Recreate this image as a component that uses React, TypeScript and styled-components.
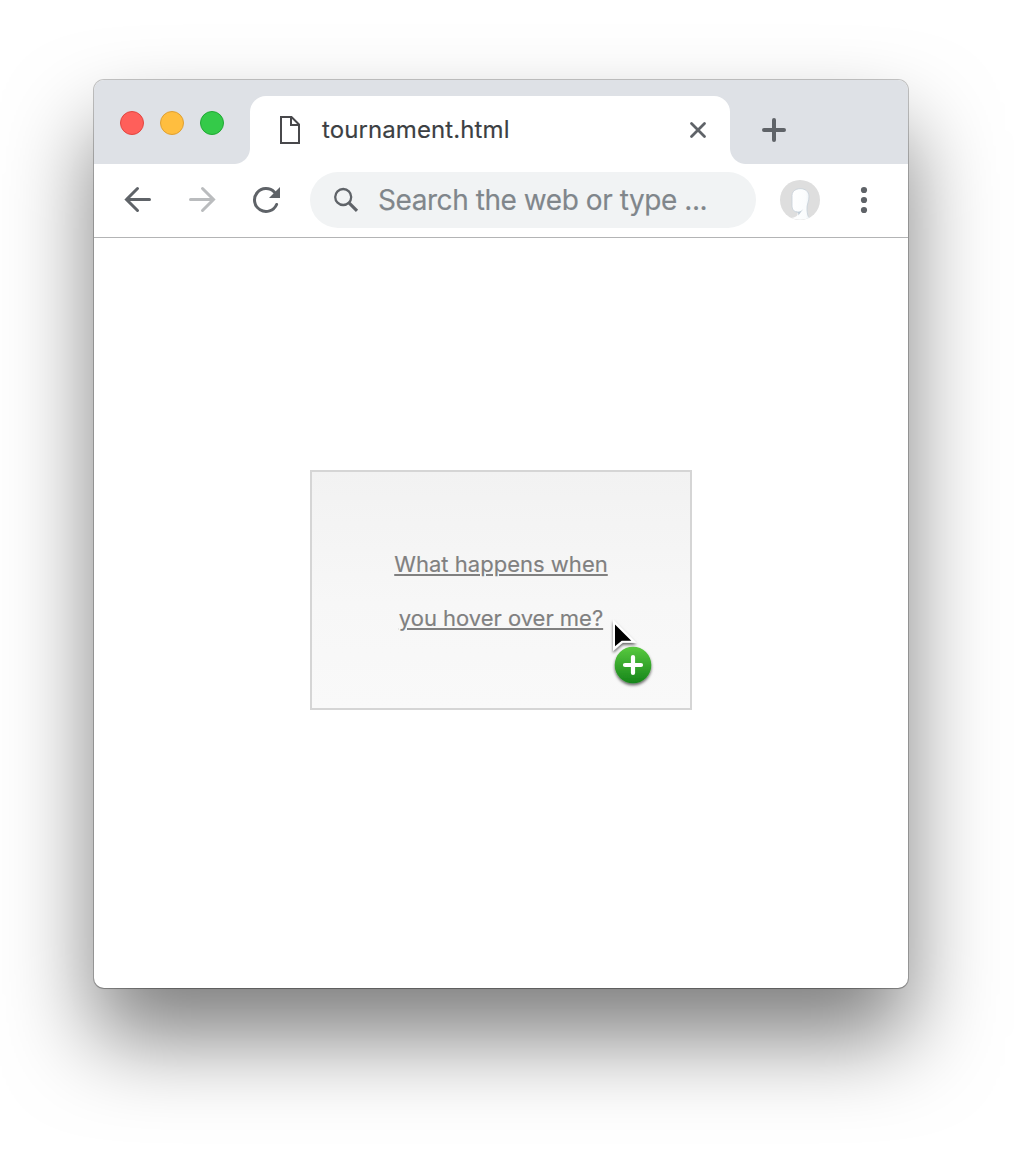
import React from 'react';
import styled, { createGlobalStyle } from 'styled-components';

const Global = createGlobalStyle`
  * { box-sizing: border-box; }
  html, body { margin: 0; background: #fff; overflow: hidden; }
  svg { display: block; flex: none; }
`;

const Page = styled.main`
  height: 1164px;
  padding: 80px 128px 176px 94px;
  font-family: Inter, 'Noto Sans', sans-serif;
  -webkit-text-stroke: 0.15px currentColor;
`;

const BrowserWindow = styled.div`
  height: 908px;
  display: flex;
  flex-direction: column;
  background: #fff;
  border-radius: 10px;
  overflow: hidden;
  box-shadow: 0 0 0 1px rgba(0, 0, 0, 0.22), 0 1px 1px rgba(0, 0, 0, 0.15),
    0 50px 88px rgba(0, 0, 0, 0.51);
`;

const TabStrip = styled.div`
  height: 84px;
  flex: none;
  display: flex;
  align-items: flex-end;
  background: #dee1e6;
`;

const WindowControls = styled.div`
  width: 156px;
  height: 84px;
  padding: 31px 0 0 26px;
  display: flex;
  gap: 16px;
`;

const ControlDot = styled.span<{ $fill: string; $edge: string }>`
  width: 24px;
  height: 24px;
  border-radius: 50%;
  background: ${(p) => p.$fill};
  border: 1px solid ${(p) => p.$edge};
`;

const Tab = styled.div`
  position: relative;
  width: 480px;
  height: 68px;
  padding: 0 22px 0 28px;
  display: flex;
  align-items: center;
  border-radius: 16px 16px 0 0;
  background: #fff;

  &::before,
  &::after {
    content: '';
    position: absolute;
    bottom: 0;
    width: 16px;
    height: 16px;
  }
  &::before {
    left: -16px;
    background: radial-gradient(circle at 0 0, transparent 15.5px, #fff 16.5px);
  }
  &::after {
    right: -16px;
    background: radial-gradient(circle at 100% 0, transparent 15.5px, #fff 16.5px);
  }
`;

const TabTitle = styled.span`
  flex: 1;
  margin-left: 20px;
  font-size: 24px;
  line-height: 32px;
  letter-spacing: 0.1px;
  color: #3c4043;
`;

const NewTab = styled.div`
  height: 68px;
  margin-left: 30px;
  display: flex;
  align-items: center;
`;

const Toolbar = styled.div`
  height: 74px;
  flex: none;
  padding: 8px 30px 9px 28px;
  display: flex;
  align-items: center;
  border-bottom: 1px solid #b3b4b5;
`;

const NavButtons = styled.div`
  width: 188px;
  display: flex;
  gap: 32px;
`;

const AddressBar = styled.div`
  width: 446px;
  height: 56px;
  padding: 0 20px;
  display: flex;
  align-items: center;
  border-radius: 28px;
  background: #f1f3f4;
`;

const Placeholder = styled.span`
  margin-left: 16px;
  font-size: 28px;
  line-height: 40px;
  letter-spacing: -0.44px;
  white-space: nowrap;
  color: #80868b;
`;

const ToolbarEnd = styled.div`
  flex: 1;
  margin-left: 24px;
  display: flex;
  align-items: center;
  justify-content: space-between;
`;

const Content = styled.section`
  flex: 1;
  padding-top: 232px;
  display: flex;
  justify-content: center;
  align-items: flex-start;
`;

const Card = styled.div`
  position: relative;
  width: 382px;
  height: 240px;
  display: flex;
  align-items: center;
  justify-content: center;
  border: 2px solid #d5d5d5;
  background: linear-gradient(#f2f2f2, #f7f7f7 55%, #f9f9f9);
`;

const CardText = styled.p`
  margin: 2px 0 0;
  text-align: center;
  font-size: 22px;
  line-height: 54px;
  color: #808080;
  text-decoration: underline;
  text-decoration-thickness: 2px;
  text-underline-offset: 2px;
`;

const Line = styled.span<{ $spacing: string }>`
  display: block;
  letter-spacing: ${(p) => p.$spacing};
`;

const Pointer = styled.div`
  position: absolute;
  left: 292px;
  top: 142px;
`;

const FileIcon = () => (
  <svg width="24" height="32" viewBox="0 0 24 32" fill="none" stroke="#48484b" strokeWidth="2">
    <path d="M3 3h10.5L21 10.5V29H3z" />
    <path d="M13 3v8h8" />
  </svg>
);

const CloseIcon = () => (
  <svg width="20" height="20" viewBox="0 0 20 20" stroke="#5f6368" strokeWidth="2.8" strokeLinecap="round">
    <path d="M3.5 3.5l13 13M16.5 3.5l-13 13" />
  </svg>
);

const PlusIcon = () => (
  <svg width="28" height="28" viewBox="0 0 28 28" stroke="#5f6368" strokeWidth="4" strokeLinecap="round">
    <path d="M14 4v20M4 14h20" />
  </svg>
);

const ArrowIcon = ({ forward = false }: { forward?: boolean }) => (
  <svg
    width="32"
    height="32"
    viewBox="0 0 32 32"
    fill="none"
    stroke={forward ? '#babcbe' : '#5f6368'}
    strokeWidth="3"
    strokeLinecap="round"
  >
    {forward ? <path d="M4.5 15.5h22.5M16.5 4.5l11 11-11 11" /> : <path d="M27.5 15.5h-23M15.5 4.5l-11 11 11 11" />}
  </svg>
);

const ReloadIcon = () => (
  <svg width="32" height="32" viewBox="0 0 32 32">
    <path
      d="M26.6 20.5A11.5 11.5 0 1 1 24.5 8.2"
      fill="none"
      stroke="#5f6368"
      strokeWidth="3"
      strokeLinecap="round"
    />
    <path d="M30 3v11H19z" fill="#5f6368" />
  </svg>
);

const SearchIcon = () => (
  <svg width="32" height="32" viewBox="0 0 32 32" fill="none" stroke="#5f6368">
    <circle cx="13.2" cy="13" r="8" strokeWidth="2.3" />
    <path d="M19 18.8l8 8" strokeWidth="3.2" />
  </svg>
);

const Avatar = () => (
  <svg width="40" height="40" viewBox="0 0 40 40">
    <defs>
      <linearGradient id="avatar-hair">
        <stop offset="0" stopColor="#fff" />
        <stop offset="0.8" stopColor="#fafcfd" />
        <stop offset="1" stopColor="#eef2f5" />
      </linearGradient>
    </defs>
    <circle cx="20" cy="20" r="20" fill="#dedede" />
    <path
      d="M12 15.5C12 6.5 28.5 6 29 16C29.2 22 26.5 24 27 30C27.3 34.5 28 36.5 29.5 38Q20 41.5 11 38C16 37.2 18.3 36 17.5 32C13.5 32 12 29 12 25Z"
      fill="url(#avatar-hair)"
    />
    <path
      d="M17.5 32C13.5 32 12 29 12 25V15.5C12 6.5 28.5 6 29 16C29.2 22 26.5 24 27 30C27.3 34 28 36.5 29 37.6"
      fill="none"
      stroke="#c6d0d9"
      strokeWidth="0.8"
    />
    <path d="M16 31.6C20 32 21.5 30.8 23.5 29C21 31.5 20.5 33 18.4 35.4C18.5 33.5 18 32.5 16 31.6Z" fill="#c0ccd6" />
  </svg>
);

const MenuIcon = () => (
  <svg width="28" height="32" viewBox="0 0 28 32" fill="#5f6368">
    <circle cx="14" cy="6" r="3.1" />
    <circle cx="14" cy="16" r="3.1" />
    <circle cx="14" cy="26" r="3.1" />
  </svg>
);

const CopyCursor = () => (
  <svg width="56" height="80" viewBox="604 614 56 80">
    <defs>
      <linearGradient id="badge-fill" x1="0" y1="0" x2="0" y2="1">
        <stop offset="0" stopColor="#59ca3f" />
        <stop offset="1" stopColor="#16851a" />
      </linearGradient>
      <filter id="cursor-shadow" x="-30%" y="-30%" width="160%" height="170%">
        <feDropShadow dx="0" dy="2" stdDeviation="1.8" floodColor="#000" floodOpacity="0.6" />
      </filter>
    </defs>
    <path d="M613 619.5V651L622.6 642.8H636.5z" fill="#fff" filter="url(#cursor-shadow)" />
    <path d="M615 624.5V646.3L621.7 640.7H631.3z" fill="#000" />
    <circle cx="633" cy="665" r="18.3" fill="url(#badge-fill)" filter="url(#cursor-shadow)" />
    <path d="M633 657v16M625 665h16" stroke="#fff" strokeWidth="4.2" strokeLinecap="round" />
  </svg>
);

export default function App() {
  return (
    <Page>
      <Global />
      <BrowserWindow>
        <TabStrip>
          <WindowControls>
            <ControlDot $fill="#ff5f5a" $edge="#e24640" />
            <ControlDot $fill="#ffbe3f" $edge="#dfa033" />
            <ControlDot $fill="#34ca49" $edge="#20a934" />
          </WindowControls>
          <Tab>
            <FileIcon />
            <TabTitle>tournament.html</TabTitle>
            <CloseIcon />
          </Tab>
          <NewTab>
            <PlusIcon />
          </NewTab>
        </TabStrip>
        <Toolbar>
          <NavButtons>
            <ArrowIcon />
            <ArrowIcon forward />
            <ReloadIcon />
          </NavButtons>
          <AddressBar>
            <SearchIcon />
            <Placeholder>Search the web or type ...</Placeholder>
          </AddressBar>
          <ToolbarEnd>
            <Avatar />
            <MenuIcon />
          </ToolbarEnd>
        </Toolbar>
        <Content>
          <Card>
            <CardText>
              <Line $spacing="0.02px">What happens when</Line>
              <Line $spacing="-0.02px">you hover over me?</Line>
            </CardText>
            <Pointer>
              <CopyCursor />
            </Pointer>
          </Card>
        </Content>
      </BrowserWindow>
    </Page>
  );
}
